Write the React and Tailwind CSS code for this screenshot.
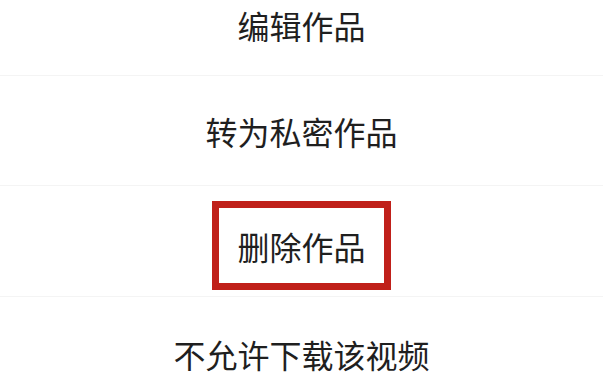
export default function App() {
  const font = { fontFamily: '"Noto Sans CJK SC", "Noto Sans", sans-serif' };
  return (
    <div className="w-[603px] h-[389px] overflow-hidden bg-white text-[#1f1f1f]" style={font}>
      <div className="h-[76px] flex justify-center items-start pt-[9px] border-b border-[#f4f4f4]">
        <span className="text-[32px] leading-[32px]">编辑作品</span>
      </div>
      <div className="h-[110px] flex justify-center items-center border-b border-[#f4f4f4]">
        <span className="text-[32px] leading-[32px]">转为私密作品</span>
      </div>
      <div className="h-[111px] flex justify-center items-start pt-[15px] border-b border-[#f4f4f4]">
        <div className="w-[179px] h-[89px] border-[7px] border-[#c0201a] flex items-center justify-center">
          <span className="text-[32px] leading-[32px]">删除作品</span>
        </div>
      </div>
      <div className="h-[90px] flex justify-center items-start pt-[41px]">
        <span className="text-[32px] leading-[32px]">不允许下载该视频</span>
      </div>
    </div>
  );
}
